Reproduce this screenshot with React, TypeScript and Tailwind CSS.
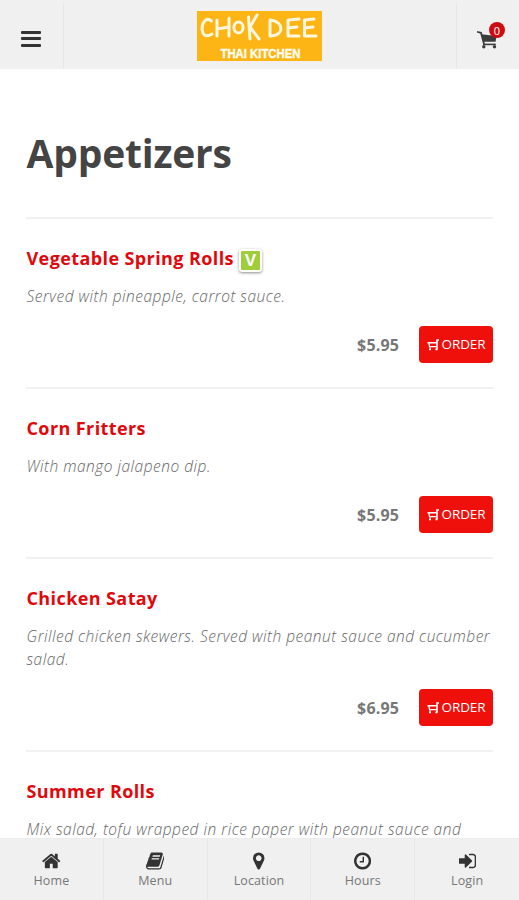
import React from "react";

type IconProps = {
  className?: string;
};

type MenuItem = {
  name: string;
  description: string;
  price?: string;
  vegetarian?: boolean;
};

type NavEntry = {
  label: string;
  icon: (props: IconProps) => React.ReactElement;
};

const ITEMS: MenuItem[] = [
  {
    name: "Vegetable Spring Rolls",
    description: "Served with pineapple, carrot sauce.",
    price: "$5.95",
    vegetarian: true,
  },
  { name: "Corn Fritters", description: "With mango jalapeno dip.", price: "$5.95" },
  {
    name: "Chicken Satay",
    description: "Grilled chicken skewers. Served with peanut sauce and cucumber salad.",
    price: "$6.95",
  },
  {
    name: "Summer Rolls",
    description: "Mix salad, tofu wrapped in rice paper with peanut sauce and",
  },
];

const NAV: NavEntry[] = [
  { label: "Home", icon: HomeIcon },
  { label: "Menu", icon: BookIcon },
  { label: "Location", icon: MarkerIcon },
  { label: "Hours", icon: ClockIcon },
  { label: "Login", icon: SignInIcon },
];

export default function App() {
  return (
    <div className="flex h-screen flex-col overflow-hidden bg-white font-['Open_Sans',sans-serif]">
      <Header />
      <main className="min-h-0 flex-1 overflow-hidden px-[26px]">
        <h1 className="pt-[56px] pl-[0.5px] text-[39px] leading-[56px] font-bold tracking-[-0.2px] text-[#444]">
          Appetizers
        </h1>
        <div className="mt-[36px]">
          {ITEMS.map((item) => (
            <MenuRow key={item.name} item={item} />
          ))}
        </div>
      </main>
      <BottomNav />
    </div>
  );
}

function Header() {
  return (
    <header className="flex h-[69px] shrink-0 items-stretch bg-[#f0f0f0]">
      <button
        type="button"
        aria-label="Open menu"
        className="mt-1 flex w-[64px] flex-col justify-center gap-[3.5px] border-r border-[#e6e6e6] pt-1 pl-[21px]"
      >
        <span className="h-[3px] w-5 rounded-[1px] bg-[#333]" />
        <span className="h-[3px] w-5 rounded-[1px] bg-[#333]" />
        <span className="h-[3px] w-5 rounded-[1px] bg-[#333]" />
      </button>
      <div className="flex flex-1 justify-center pr-[1px]">
        <Logo />
      </div>
      <button
        type="button"
        aria-label="Cart"
        className="mt-1 flex w-[63px] items-center border-l border-[#e6e6e6] pt-[7px] pl-[20px]"
      >
        <span className="relative">
          <CartIcon className="h-[18px] w-5 text-[#3c3c3c]" />
          <span className="absolute -top-[9px] left-[12px] flex size-4 items-center justify-center rounded-full bg-[#cc0c12] text-[11px] leading-none text-white">
            0
          </span>
        </span>
      </button>
    </header>
  );
}

function Logo() {
  return (
    <svg viewBox="0 0 125 50" className="mt-[11px] h-[50px] w-[125px]">
      <rect width="125" height="50" fill="#fdb515" />
      <g
        fill="none"
        stroke="#fff7df"
        strokeWidth="3"
        strokeLinecap="round"
        strokeLinejoin="round"
      >
        <path d="M14.5 10C9 5.5 5 12 5 18C6 26 10 26 15 23" />
        <path d="M20 9L20 25M32 7L32 25M20 18L32 16" />
        <ellipse cx="41.5" cy="16.5" rx="4.6" ry="5.4" />
        <path d="M51.5 6L53 28M60 4L53 16L62 28" />
        <path d="M73 10L73 25C88 25 87 10 73 9" />
        <path d="M102 8L91 9L91 25L102 25M91 17L100 16" />
        <path d="M117 8L107.5 9L107.5 25L119 25M107.5 17L116 16" />
      </g>
      <text
        x="23.5"
        y="46.5"
        textLength="80"
        lengthAdjust="spacingAndGlyphs"
        fill="#fffdf0"
        className="font-['Liberation_Sans',sans-serif] text-[12px] font-bold"
        stroke="#fffdf0"
        strokeWidth="0.4"
      >
        THAI KITCHEN
      </text>
    </svg>
  );
}

function MenuRow({ item }: { item: MenuItem }) {
  return (
    <section className="border-t-2 border-[#f1f1f1] pt-[25px] pb-[24px]">
      <h2 className="flex h-7 items-center pl-[0.5px] text-[18px] leading-7 font-bold tracking-[0.4px] text-[#e0080c]">
        {item.name}
        {item.vegetarian ? <VegetarianBadge /> : null}
      </h2>
      <p className="mt-[13px] pl-[0.5px] text-[15.5px] leading-[23px] font-light tracking-[0.5px] text-[#666] italic">
        {item.description}
      </p>
      {item.price ? (
        <div className="mt-[18px] flex items-center justify-end">
          <span className="mr-5 text-[16px] font-bold tracking-[0.15px] text-[#777]">
            {item.price}
          </span>
          <button
            type="button"
            className="flex h-[37px] w-[74px] items-center justify-center gap-[3px] rounded-[4px] bg-[#ef100c] text-[13.5px] font-medium tracking-[-0.1px] text-white"
          >
            <OrderCartIcon className="h-3 w-3" />
            ORDER
          </button>
        </div>
      ) : null}
    </section>
  );
}

function VegetarianBadge() {
  return (
    <span className="mt-[4px] ml-[5px] flex size-[23px] items-center justify-center rounded-[3px] border-2 border-white bg-[#9fce3b] shadow-[0_1px_3px_rgba(0,0,0,0.45)]">
      <span className="font-['Liberation_Sans',sans-serif] text-[17px] leading-none font-bold tracking-normal text-white">
        V
      </span>
    </span>
  );
}

function BottomNav() {
  return (
    <nav className="grid h-[62px] shrink-0 grid-cols-5 border-t border-[#ececec] bg-[#f0f0f0]">
      {NAV.map(({ label, icon: Icon }) => (
        <a
          key={label}
          className="flex flex-col items-center border-r border-[#e8e8e8] pt-[12px] text-[12.5px] leading-[18px] tracking-[0.1px] text-[#777] last:border-r-0"
        >
          <Icon className="mb-px h-5 text-[#333]" />
          {label}
        </a>
      ))}
    </nav>
  );
}

function CartIcon({ className }: IconProps) {
  return (
    <svg viewBox="0 0 20 18" fill="currentColor" className={className}>
      <path
        d="M0.8 1L4 1.8L7 13"
        fill="none"
        stroke="currentColor"
        strokeWidth="1.8"
        strokeLinecap="round"
      />
      <path d="M4.2 3.2L19.5 5L18.6 10.8L6.2 10.8Z" />
      <path d="M6.2 12.6H18.8V14.2H6.2Z" />
      <circle cx="6.8" cy="15.8" r="1.7" />
      <circle cx="17.5" cy="15.8" r="1.7" />
    </svg>
  );
}

// Small cart with the handle on the right, used inside the order buttons
function OrderCartIcon({ className }: IconProps) {
  return (
    <svg viewBox="0 0 12 12" fill="none" stroke="currentColor" className={className}>
      <path d="M12 1H10V10.5" strokeWidth="1.6" />
      <path d="M0.5 3.7H10M1.8 3.7L2.6 7.6H10" strokeWidth="1.4" />
      <path d="M2 10.4H4M8.4 10.4H10.4" strokeWidth="1.8" />
      <path d="M3 7.6V10" strokeWidth="1" />
    </svg>
  );
}

function HomeIcon({ className }: IconProps) {
  return (
    <svg viewBox="0 0 1664 1792" fill="currentColor" className={className}>
      <path d="M1408 992v480q0 26-19 45t-45 19h-384v-384h-256v384h-384q-26 0-45-19t-19-45v-480q0-1 .5-3t.5-3l575-474 575 474q1 2 1 6zm223-69l-62 74q-8 9-21 11h-3q-13 0-21-7l-692-577-692 577q-12 8-24 7-13-2-21-11l-62-74q-8-10-7-23.5t11-21.5l719-599q32-26 76-26t76 26l244 204v-195q0-14 9-23t23-9h192q14 0 23 9t9 23v408l219 182q10 8 11 21.5t-7 23.5z" />
    </svg>
  );
}

function BookIcon({ className }: IconProps) {
  return (
    <svg viewBox="0 0 1664 1792" fill="currentColor" className={className}>
      <path d="M1639 478q40 57 18 129l-275 906q-19 64-76.5 107.5t-122.5 43.5h-923q-77 0-148.5-53.5t-99.5-131.5q-24-67-2-127 0-4 3-27t4-37q1-8-3-21.5t-3-19.5q2-11 8-21t16.5-23.5 16.5-23.5q23-38 45-91.5t30-91.5q3-10 .5-30t-.5-28q3-11 17-28t17-23q21-36 42-92t25-90q1-9-2.5-32t.5-28q4-13 22-30.5t22-22.5q19-26 42.5-84.5t27.5-96.5q1-8-3-25.5t-2-26.5q2-8 9-18t18-23 17-21q8-12 16.5-30.5t15-35 16-36 19.5-32 26.5-23.5 36-11.5 47.5 5.5l-1 3q38-9 51-9h761q74 0 114 56t18 130l-274 906q-36 119-71.5 153.5t-128.5 34.5h-869q-27 0-38 15-11 16-1 43 24 70 144 70h923q29 0 56-15.5t35-41.5l300-987q7-22 5-57 38 15 59 43zm-1064 2q-4 13 2 22.5t20 9.5h608q13 0 25.5-9.5t16.5-22.5l21-64q4-13-2-22.5t-20-9.5h-608q-13 0-25.5 9.5t-16.5 22.5zm-83 256q-4 13 2 22.5t20 9.5h608q13 0 25.5-9.5t16.5-22.5l21-64q4-13-2-22.5t-20-9.5h-608q-13 0-25.5 9.5t-16.5 22.5z" />
    </svg>
  );
}

function MarkerIcon({ className }: IconProps) {
  return (
    <svg viewBox="0 0 1024 1792" fill="currentColor" className={className}>
      <path d="M768 640q0-106-75-181t-181-75-181 75-75 181 75 181 181 75 181-75 75-181zm256 0q0 109-33 179l-364 774q-16 33-47.5 52t-67.5 19-67.5-19-46.5-52l-365-774q-33-70-33-179 0-212 150-362t362-150 362 150 150 362z" />
    </svg>
  );
}

function ClockIcon({ className }: IconProps) {
  return (
    <svg viewBox="0 0 1536 1792" fill="currentColor" className={className}>
      <path d="M896 544v448q0 14-9 23t-23 9h-320q-14 0-23-9t-9-23v-64q0-14 9-23t23-9h224v-352q0-14 9-23t23-9h64q14 0 23 9t9 23zm416 352q0-148-73-273t-198-198-273-73-273 73-198 198-73 273 73 273 198 198 273 73 273-73 198-198 73-273zm224 0q0 209-103 385.5t-279.5 279.5-385.5 103-385.5-103-279.5-279.5-103-385.5 103-385.5 279.5-279.5 385.5-103 385.5 103 279.5 279.5 103 385.5z" />
    </svg>
  );
}

function SignInIcon({ className }: IconProps) {
  return (
    <svg viewBox="0 0 1536 1792" fill="currentColor" className={className}>
      <path d="M1184 896q0 26-19 45l-544 544q-19 19-45 19t-45-19-19-45v-288h-448q-26 0-45-19t-19-45v-384q0-26 19-45t45-19h448v-288q0-26 19-45t45-19 45 19l544 544q19 19 19 45zm352-352v704q0 119-84.5 203.5t-203.5 84.5h-320q-13 0-22.5-9.5t-9.5-22.5q0-4-1-20t-.5-26.5 3-23.5 10-19.5 20.5-6.5h320q66 0 113-47t47-113v-704q0-66-47-113t-113-47h-312l-11.5-1-11.5-3-8-5.5-7-9-2-13.5q0-4-1-20t-.5-26.5 3-23.5 10-19.5 20.5-6.5h320q119 0 203.5 84.5t84.5 203.5z" />
    </svg>
  );
}
